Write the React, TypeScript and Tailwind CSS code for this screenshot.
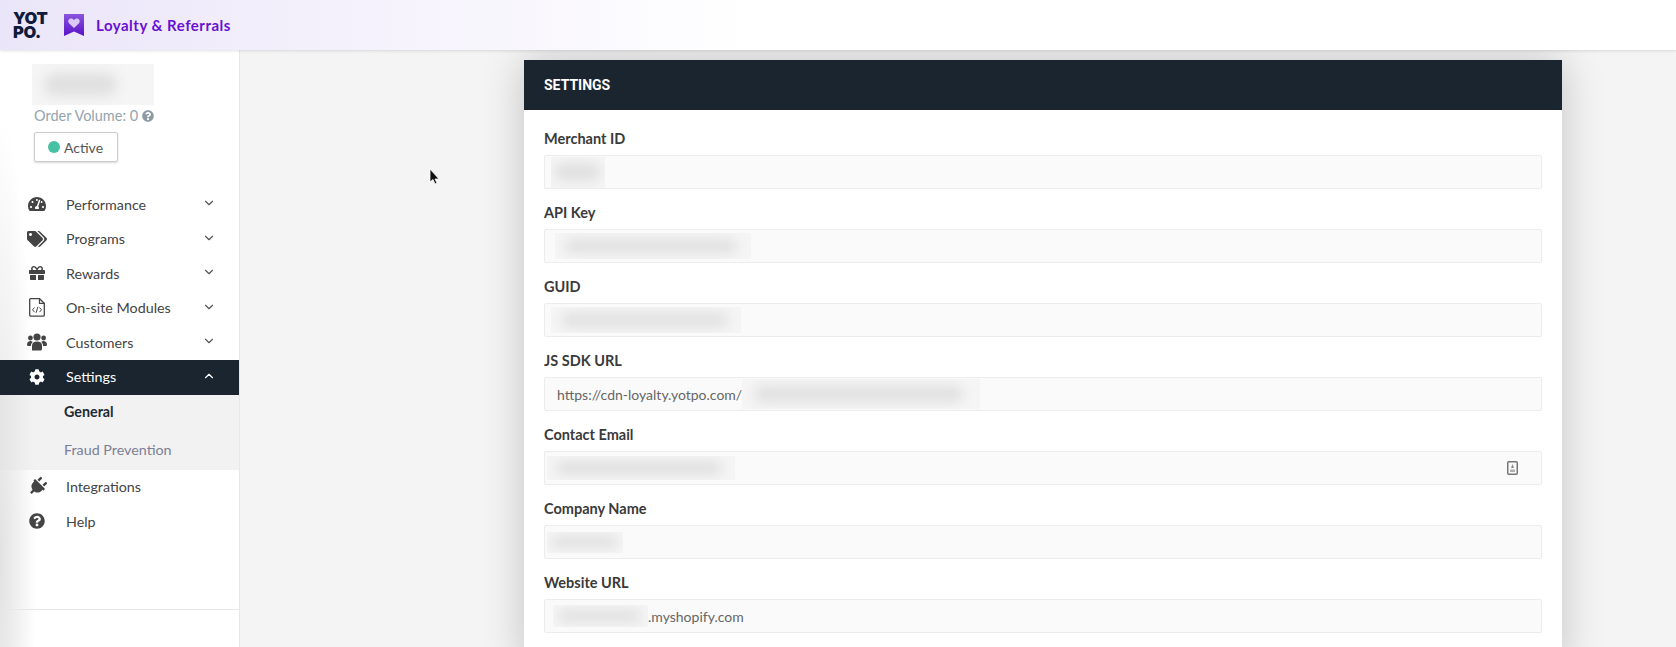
import React from 'react';
import {
  FaCog,
  FaGift,
  FaPlug,
  FaQuestionCircle,
  FaTachometerAlt,
  FaTags,
} from 'react-icons/fa';
import { FiChevronDown, FiChevronUp } from 'react-icons/fi';

const Redacted: React.FC<{ className: string; blob?: string }> = ({ className, blob = 'w-[88%] ml-[5%]' }) => (
  <div className={`flex items-center overflow-hidden bg-[#f5f5f5] shrink-0 ${className}`}>
    <div className={`h-[55%] rounded-full bg-[#e0e0e0] blur-[6px] ${blob}`}></div>
  </div>
);

const FileCodeIcon: React.FC = () => (
  <svg width="16" height="19" viewBox="0 0 16 19" fill="none" stroke="#444444">
    <path d="M1.5 0.7 H10.5 L15.3 5.3 V17 a1.2 1.2 0 0 1 -1.2 1.2 H1.9 a1.2 1.2 0 0 1 -1.2 -1.2 V1.5 a0.8 0.8 0 0 1 0.8 -0.8 Z" strokeWidth="1.3" />
    <path d="M10.5 0.7 V5.3 H15.3" strokeWidth="1.2" />
    <path d="M5.5 9.5 L3.5 11.8 L5.5 14.1 M10.5 9.5 L12.5 11.8 L10.5 14.1 M8.9 8.8 L7.1 14.8" strokeWidth="1" />
  </svg>
);

const UsersIcon: React.FC = () => (
  <svg width="20" height="18" viewBox="0 0 20 18" fill="#444444">
    <circle cx="10" cy="4" r="3.6" />
    <circle cx="3.4" cy="5" r="2.4" />
    <circle cx="16.6" cy="5" r="2.4" />
    <path d="M5 17.5 V12.5 C5 10 7 8.6 10 8.6 C13 8.6 15 10 15 12.5 V16 C15 17 14 17.5 13 17.5 Z" />
    <path d="M0 11.5 C0 9.2 1.6 8 3.4 8 C4.4 8 5.2 8.4 5.8 8.9 C4.6 9.9 3.9 11.1 3.9 13 H1.2 C0.5 13 0 12.4 0 11.5 Z" />
    <path d="M20 11.5 C20 9.2 18.4 8 16.6 8 C15.6 8 14.8 8.4 14.2 8.9 C15.4 9.9 16.1 11.1 16.1 13 H18.8 C19.5 13 20 12.4 20 11.5 Z" />
  </svg>
);

const navTop = [
  { label: 'Performance', icon: <FaTachometerAlt className="text-[18px]" /> },
  { label: 'Programs', icon: <FaTags className="text-[20px]" /> },
  { label: 'Rewards', icon: <FaGift className="text-[16px]" /> },
  { label: 'On-site Modules', icon: <FileCodeIcon /> },
  { label: 'Customers', icon: <UsersIcon /> },
];

const iconCell = 'w-[66px] pl-[17px] pr-[9px] flex justify-center shrink-0';

const Sidebar: React.FC = () => (
  <aside className="relative w-[240px] shrink-0 bg-white border-r border-[#e8e8e8] font-['Lato',sans-serif] text-[14.3px] text-[#444444]">
    {/* left edge shading */}
    <div className="absolute left-0 top-0 bottom-0 w-[60px] bg-[radial-gradient(ellipse_36px_440px_at_0_85%,#e2e2e2,transparent)]"></div>

    <div className="relative pl-[32px] pt-[14px] h-[137px]">
      <Redacted className="w-[122px] h-[41px]" blob="w-[60%] ml-[10%]" />
      <div className="flex items-center gap-[4px] ml-[2px] mt-[1px] h-[20px] text-[14.5px] text-[#94a3ad]">
        Order Volume: 0 <FaQuestionCircle className="text-[12px] text-[#8c9aa3]" />
      </div>
      <div className="flex items-center gap-[4px] ml-[2px] mt-[6px] w-[84px] h-[30px] pl-[13px] bg-white border border-[#cccccc] rounded-[2px] shadow-[0_1px_2px_rgba(0,0,0,0.15)] text-[14px] text-[#555555]">
        <span className="w-[12px] h-[12px] rounded-full bg-[#48c0a3]"></span>
        Active
      </div>
    </div>

    <nav className="relative">
      {navTop.map(item => (
        <div key={item.label} className="flex items-center h-[34.5px]">
          <span className={iconCell}>{item.icon}</span>
          <span className="flex-1">{item.label}</span>
          <FiChevronDown className="text-[14px] mr-[23px] -mt-[2px] text-[#555555]" />
        </div>
      ))}
      <div className="flex items-center h-[35px] bg-[#1a2530] text-white">
        <span className={iconCell}><FaCog className="text-[16px]" /></span>
        <span className="flex-1">Settings</span>
        <FiChevronUp className="text-[14px] mr-[23px] -mt-[2px]" />
      </div>
      <div className="h-[75px] bg-gradient-to-r from-[#e4e4e4] via-[#f2f2f2] via-[14%] to-[#f2f2f2] pl-[64px]">
        <div className="flex items-center h-[35px] font-bold text-[#1e2a35]">General</div>
        <div className="flex items-center h-[40px] text-[#7b7f95]">Fraud Prevention</div>
      </div>
      <div className="flex items-center h-[34.5px]">
        <span className={iconCell}><FaPlug className="text-[19px] rotate-45" /></span>
        <span>Integrations</span>
      </div>
      <div className="flex items-center h-[34.5px]">
        <span className={iconCell}><FaQuestionCircle className="text-[16px]" /></span>
        <span>Help</span>
      </div>
    </nav>

    <div className="absolute left-0 right-0 top-[559px] border-t border-[#e8e8e8]"></div>
  </aside>
);

const Field: React.FC<{ label: string; children?: React.ReactNode }> = ({ label, children }) => (
  <div className="mb-[14px]">
    <div className="h-[20px] mb-[6px] flex items-center font-bold text-[14.5px] text-[#3a3a3a]">{label}</div>
    <div className="flex items-center h-[34px] bg-[#fafafa] border border-[#ececec] rounded-[2px] text-[14px] text-[#666666] overflow-hidden">
      {children}
    </div>
  </div>
);

const SettingsCard: React.FC = () => (
  <div className="ml-[284px] w-[1038px] bg-white shadow-[0_0_40px_rgba(0,0,0,0.2)] font-['Lato',sans-serif]">
    <div className="flex items-center h-[50px] px-[20px] bg-[#1a2530] font-['Roboto',sans-serif] font-bold text-[14px] text-white">
      SETTINGS
    </div>
    <div className="pt-[19px] px-[20px] pb-[20px]">
      <Field label="Merchant ID">
        <Redacted className="ml-[6px] w-[54px] h-[31px]" />
      </Field>
      <Field label="API Key">
        <Redacted className="ml-[10px] w-[196px] h-[26px]" />
      </Field>
      <Field label="GUID">
        <Redacted className="ml-[6px] w-[190px] h-[26px]" />
      </Field>
      <Field label="JS SDK URL">
        <span className="pl-[12px] w-[197px] shrink-0 whitespace-nowrap">https://cdn-loyalty.yotpo.com/</span>
        <Redacted className="w-[238px] h-[30px]" />
      </Field>
      <Field label="Contact Email">
        <Redacted className="ml-[2px] w-[188px] h-[24px]" />
        <svg className="ml-auto mr-[23px]" width="11" height="14" viewBox="0 0 11 14" fill="none">
          <rect x="0.75" y="0.75" width="9.5" height="12.5" rx="1" stroke="#777777" strokeWidth="1.5" />
          <path d="M5.5 3 L7 7 H4 Z" fill="#888888" />
          <rect x="3" y="8.5" width="5" height="2.5" fill="#b0b0b0" />
        </svg>
      </Field>
      <Field label="Company Name">
        <Redacted className="ml-[2px] w-[76px] h-[21px]" />
      </Field>
      <Field label="Website URL">
        <Redacted className="ml-[8px] w-[95px] h-[22px]" />
        <span>.myshopify.com</span>
      </Field>
    </div>
  </div>
);

const App: React.FC = () => (
  <div className="relative flex flex-col h-[647px] overflow-hidden bg-[#f4f4f4]">
    <header className="relative z-10 flex items-center h-[50px] shrink-0 bg-gradient-to-r from-[#ebe5f9] to-white to-[45%] shadow-[0_1px_3px_rgba(0,0,0,0.12)]">
      <div className="ml-[13px] w-[51px] font-['Inter',sans-serif] font-black text-[16.5px] leading-[14px] tracking-[-0.4px] text-[#0f1a3c]">
        YOT<br />PO.
      </div>
      <svg width="20" height="22" viewBox="0 0 20 22" className="mr-[12px]">
        <defs>
          <linearGradient id="mark" x1="0" y1="0" x2="0" y2="1">
            <stop offset="0" stopColor="#8a55dc" />
            <stop offset="1" stopColor="#5a12c8" />
          </linearGradient>
        </defs>
        <path d="M0 0 H20 V22 L10 17.5 L0 22 Z" fill="url(#mark)" />
        <path d="M10 14 L5 9.2 C3.4 7.4 4.6 4.6 7 4.6 C8.3 4.6 9.4 5.3 10 6.3 C10.6 5.3 11.7 4.6 13 4.6 C15.4 4.6 16.6 7.4 15 9.2 Z" fill="#dcc8f7" />
      </svg>
      <span className="font-['Lato',sans-serif] font-bold text-[15px] tracking-[0.5px] text-[#6a0fd4]">Loyalty &amp; Referrals</span>
    </header>

    <div className="flex flex-1 min-h-0">
      <Sidebar />
      <main className="flex-1 pt-[10px] overflow-hidden">
        <SettingsCard />
      </main>
    </div>

    {/* mouse pointer */}
    <svg className="absolute left-[429px] top-[168px] z-20" width="12" height="18" viewBox="0 0 12 18">
      <path d="M1 1 V14 L4 11.5 L6 16 L8 15 L6 11 H10 Z" fill="#111111" stroke="#ffffff" strokeWidth="0.8" />
    </svg>
  </div>
);

export default App;
